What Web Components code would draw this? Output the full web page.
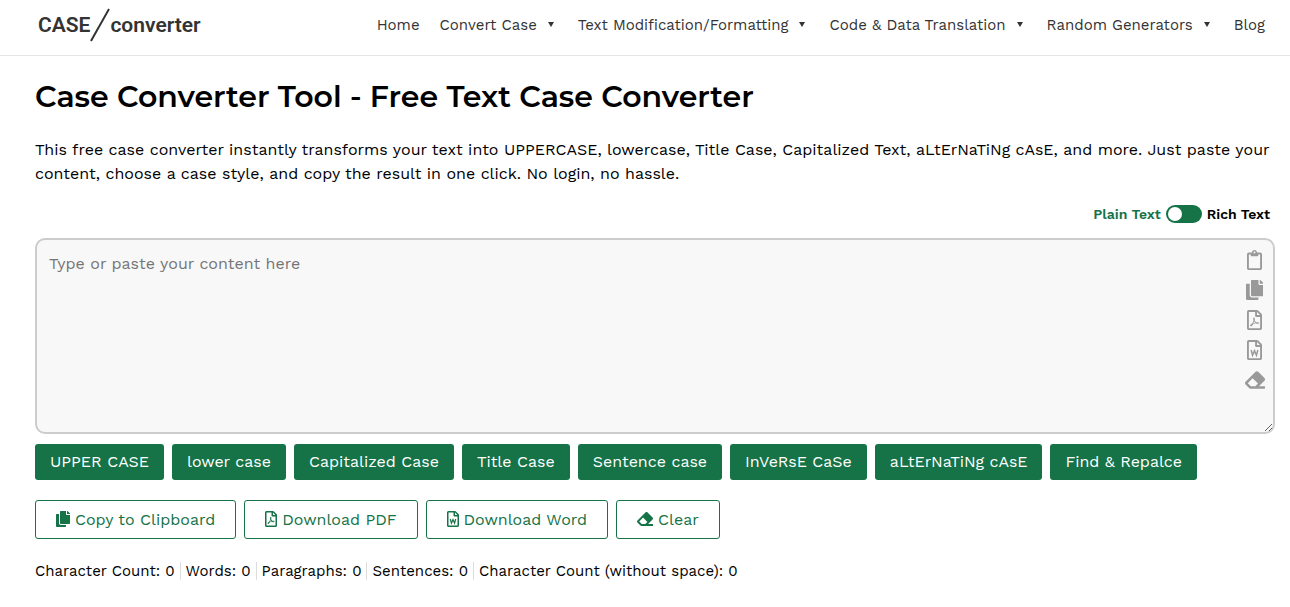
<!DOCTYPE html>
<html lang="en">
<head>
<meta charset="utf-8">
<meta name="viewport" content="width=device-width, initial-scale=1">
<title>Case Converter</title>
<style>
  body { margin: 0; background: #fff; color: #000; font: 16px/24px "Work Sans", Inter, sans-serif; }
</style>
</head>
<body>
<site-header>
  <nav-item>Home</nav-item>
  <nav-item menu>Convert Case</nav-item>
  <nav-item menu>Text Modification/Formatting</nav-item>
  <nav-item menu>Code &amp; Data Translation</nav-item>
  <nav-item menu>Random Generators</nav-item>
  <nav-item>Blog</nav-item>
</site-header>
<converter-page>
  <span slot="title">Case Converter Tool - Free Text Case Converter</span>
  <span slot="intro">This free case converter instantly transforms your text into UPPERCASE, lowercase, Title Case, Capitalized Text, aLtErNaTiNg cAsE, and more. Just paste your content, choose a case style, and copy the result in one click. No login, no hassle.</span>
  <mode-switch slot="editor"></mode-switch>
  <text-editor slot="editor"></text-editor>
  <case-button slot="cases">UPPER CASE</case-button>
  <case-button slot="cases">lower case</case-button>
  <case-button slot="cases">Capitalized Case</case-button>
  <case-button slot="cases">Title Case</case-button>
  <case-button slot="cases">Sentence case</case-button>
  <case-button slot="cases">InVeRsE CaSe</case-button>
  <case-button slot="cases">aLtErNaTiNg cAsE</case-button>
  <case-button slot="cases">Find &amp; Repalce</case-button>
  <action-button slot="actions" icon="copy">Copy to Clipboard</action-button>
  <action-button slot="actions" icon="pdf">Download PDF</action-button>
  <action-button slot="actions" icon="word">Download Word</action-button>
  <action-button slot="actions" icon="eraser">Clear</action-button>
  <count-item slot="counts">Character Count: 0</count-item>
  <count-item slot="counts">Words: 0</count-item>
  <count-item slot="counts">Paragraphs: 0</count-item>
  <count-item slot="counts">Sentences: 0</count-item>
  <count-item slot="counts">Character Count (without space): 0</count-item>
</converter-page>
<script>
const sheet = "M369.9 97.9L286 14C277 5 264.8-.1 252.1-.1H48C21.5 0 0 21.5 0 48v416c0 26.5 21.5 48 48 48h288c26.5 0 48-21.5 48-48V131.9c0-12.7-5.1-25-14.1-34zM332.1 128H256V51.9l76.1 76.1zM48 464V48h160v104c0 13.3 10.7 24 24 24h104v288H48z";
const ICONS = {
  clipboard: [384, '<path d="M336 64h-80c0-35.3-28.7-64-64-64s-64 28.7-64 64H48C21.5 64 0 85.5 0 112v352c0 26.5 21.5 48 48 48h288c26.5 0 48-21.5 48-48V112c0-26.5-21.5-48-48-48zM192 40c13.3 0 24 10.7 24 24s-10.7 24-24 24-24-10.7-24-24 10.7-24 24-24zm144 418c0 3.3-2.7 6-6 6H54c-3.3 0-6-2.7-6-6V118c0-3.3 2.7-6 6-6h42v36c0 6.6 5.4 12 12 12h168c6.6 0 12-5.4 12-12v-36h42c3.3 0 6 2.7 6 6z"/>'],
  copy: [448, '<path d="M320 448v40c0 13.255-10.745 24-24 24H24c-13.255 0-24-10.745-24-24V120c0-13.255 10.745-24 24-24h72v296c0 30.879 25.121 56 56 56h168zm0-344V0H152c-13.255 0-24 10.745-24 24v368c0 13.255 10.745 24 24 24h272c13.255 0 24-10.745 24-24V128H344c-13.2 0-24-10.8-24-24zm120.971-31.029L375.029 7.029A24 24 0 0 0 358.059 0H352v96h96v-6.059a24 24 0 0 0-7.029-16.97z"/>'],
  pdf: [384, `<path d="${sheet}m250.2-143.7c-12.2-12-47-8.7-64.4-6.5-17.2-10.5-28.7-25-36.8-46.3 3.9-16.1 10.1-40.6 5.4-56-4.2-26.2-37.8-23.6-42.6-5.9-4.4 16.1-.4 38.5 7 67.1-10 23.9-24.9 56-35.4 74.4-20 10.3-47 26.2-51 46.2-3.3 15.8 26 55.2 76.1-31.2 22.4-7.4 46.8-16.5 68.4-20.1 18.9 10.2 41 17 55.8 17 25.5 0 28-28.2 17.5-38.7zm-198.1 77.8c5.1-13.7 24.5-29.5 30.4-35-19 30.3-30.4 35.7-30.4 35zm81.6-190.6c7.4 0 6.7 32.1 1.8 40.8-4.4-13.9-4.3-40.8-1.8-40.8zm-24.4 136.6c9.7-16.9 18-37 24.7-54.7 8.3 15.1 18.9 27.2 30.1 35.5-20.8 4.3-38.9 13.1-54.8 19.2zm131.6-5s-5 6-37.3-7.8c35.1-2.6 40.9 5.4 37.3 7.8z"/>`],
  word: [384, `<path d="${sheet}"/><path d="M106 256l36 136 50-120 50 120 36-136" fill="none" stroke="currentColor" stroke-width="38"/>`],
  eraser: [512, '<path d="M497.941 273.941c18.745-18.745 18.745-49.137 0-67.882l-160-160c-18.745-18.745-49.136-18.746-67.883 0l-256 256c-18.745 18.745-18.745 49.137 0 67.882l96 96A48.004 48.004 0 0 0 144 480h356c6.627 0 12-5.373 12-12v-40c0-6.627-5.373-12-12-12H355.883l142.058-142.059zm-302.627-62.627l137.373 137.373L265.373 416H150.628l-80-80 124.686-124.686z"/>']
};
const svg = name => `<svg viewBox="0 0 ${ICONS[name][0]} 512" fill="currentColor" aria-hidden="true">${ICONS[name][1]}</svg>`;

function define(name, render) {
  customElements.define(name, class extends HTMLElement {
    constructor() {
      super();
      this.attachShadow({ mode: "open" });
    }
    connectedCallback() {
      this.shadowRoot.innerHTML = render(this);
    }
  });
}

define("site-header", () => `
<style>
  :host { display: block; border-bottom: 1px solid #e5e5e5; }
  header { display: flex; justify-content: space-between; align-items: center; min-height: 55px; padding: 0 25px 6px 38px; box-sizing: border-box; }
  nav { display: flex; gap: 20px; }
</style>
<header><brand-logo></brand-logo><nav aria-label="Main"><slot></slot></nav></header>`);

define("brand-logo", () => `
<style>
  :host { display: block; }
  a { display: flex; align-items: center; color: #333; text-decoration: none; font: 600 21px/34px Roboto, "Liberation Sans", sans-serif; }
  svg { width: 20px; height: 34px; flex: none; }
</style>
<a href="#"><span>CASE</span><svg viewBox="0 0 20 34" aria-hidden="true"><path d="M1 33L19 1" stroke="#333" stroke-width="2"/></svg><span>converter</span></a>`);

define("nav-item", el => `
<style>
  :host { display: block; }
  a { display: flex; align-items: center; gap: 11px; color: #333; text-decoration: none; font-size: 15px; line-height: 24px; white-space: nowrap; }
  i { margin-right: 4px; border: 3px solid transparent; border-top: 5px solid #333; border-bottom: 0; }
</style>
<a href="#"><slot></slot>${el.hasAttribute("menu") ? "<i></i>" : ""}</a>`);

define("converter-page", () => `
<style>
  :host { display: block; padding: 23px 15px 24px 35px; }
  h1 { margin: 0; font: 600 30px/36px Montserrat, Inter, sans-serif; }
  p { margin: 23px 0 16px; }
  .cases, .actions { display: flex; flex-wrap: wrap; gap: 8px; }
  .cases { margin-top: 10px; }
  .actions { margin-top: 20px; }
  .counts { display: flex; flex-wrap: wrap; margin-top: 23px; }
</style>
<main>
  <h1><slot name="title"></slot></h1>
  <p><slot name="intro"></slot></p>
  <slot name="editor"></slot>
  <div class="cases"><slot name="cases"></slot></div>
  <div class="actions"><slot name="actions"></slot></div>
  <div class="counts"><slot name="counts"></slot></div>
</main>`);

define("mode-switch", () => `
<style>
  :host { display: block; }
  label { display: flex; justify-content: flex-end; align-items: center; gap: 5px; padding-right: 5px; font-size: 14px; font-weight: 600; line-height: 24px; }
  .plain { color: #157347; }
  input { appearance: none; display: flex; align-items: center; width: 36px; height: 18px; margin: 0; padding: 0 2px; box-sizing: border-box; border-radius: 9px; background: #157347; }
  input::before { content: ""; width: 14px; height: 14px; border-radius: 50%; background: #fff; }
  input:checked { justify-content: flex-end; }
</style>
<label><span class="plain">Plain Text</span><input type="checkbox" role="switch"><span>Rich Text</span></label>`);

define("text-editor", () => `
<style>
  :host { display: block; position: relative; margin-top: 12px; }
  textarea { display: block; width: 100%; height: 196px; box-sizing: border-box; padding: 12px 50px 12px 12px; border: 2px solid #ccc; border-radius: 10px; background: #f8f8f8; color: #000; font: inherit; resize: vertical; }
  textarea::placeholder { color: #757575; opacity: 1; }
  .tools { position: absolute; top: 12px; right: 10px; display: flex; flex-direction: column; gap: 10px; }
  button { display: flex; justify-content: center; width: 21px; height: 20px; padding: 0; border: 0; background: none; color: #999; cursor: pointer; }
  svg { height: 20px; }
</style>
<textarea aria-label="Your content" placeholder="Type or paste your content here"></textarea>
<div class="tools">
  <button aria-label="Paste">${svg("clipboard")}</button>
  <button aria-label="Copy">${svg("copy")}</button>
  <button aria-label="Download PDF">${svg("pdf")}</button>
  <button aria-label="Download Word">${svg("word")}</button>
  <button aria-label="Clear">${svg("eraser")}</button>
</div>`);

define("case-button", () => `
<style>
  :host { display: block; }
  button { height: 36px; padding: 0 15px; border: 0; border-radius: 3px; background: #157347; color: #fff; font: inherit; white-space: nowrap; cursor: pointer; }
</style>
<button><slot></slot></button>`);

define("action-button", el => `
<style>
  :host { display: block; }
  button { display: flex; align-items: center; gap: 5px; height: 39px; padding: 0 20px; box-sizing: border-box; border: 1px solid #157347; border-radius: 3px; background: #fff; color: #157347; font: inherit; white-space: nowrap; cursor: pointer; }
  svg { height: 16px; margin-bottom: 2px; }
</style>
<button>${svg(el.getAttribute("icon"))}<span><slot></slot></span></button>`);

define("count-item", () => `
<style>
  :host { display: block; padding-right: 5px; font-size: 15px; line-height: 18px; }
  :host(:not(:last-child)) { margin-right: 5px; border-right: 1px solid #ddd; }
</style>
<slot></slot>`);
</script>
</body>
</html>
